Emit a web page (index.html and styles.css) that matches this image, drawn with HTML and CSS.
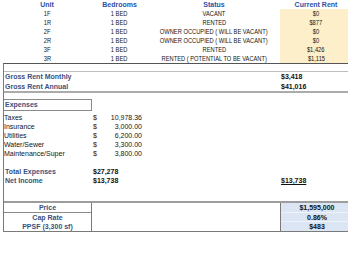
FILE: index.html
```html
<!DOCTYPE html>
<html>
<head>
<meta charset="utf-8">
<link rel="stylesheet" href="styles.css">
</head>
<body>
<div class="sheet">
  <div class="units">
    <div class="r head"><span>Unit</span><span>Bedrooms</span><span>Status</span><span>Current Rent</span></div>
    <div class="r"><span><span class="n">1F</span></span><span><span class="n">1 BED</span></span><span><span class="n">VACANT</span></span><span class="rent"><span class="n">$0</span></span></div>
    <div class="r"><span><span class="n">1R</span></span><span><span class="n">1 BED</span></span><span><span class="n">RENTED</span></span><span class="rent"><span class="n">$877</span></span></div>
    <div class="r"><span><span class="n">2F</span></span><span><span class="n">1 BED</span></span><span><span class="n">OWNER OCCUPIED ( WILL BE VACANT)</span></span><span class="rent"><span class="n">$0</span></span></div>
    <div class="r"><span><span class="n">2R</span></span><span><span class="n">1 BED</span></span><span><span class="n">OWNER OCCUPIED ( WILL BE VACANT)</span></span><span class="rent"><span class="n">$0</span></span></div>
    <div class="r"><span><span class="n">3F</span></span><span><span class="n">1 BED</span></span><span><span class="n">RENTED</span></span><span class="rent"><span class="n">$1,426</span></span></div>
    <div class="r"><span><span class="n">3R</span></span><span><span class="n">1 BED</span></span><span><span class="n">RENTED ( POTENTIAL TO BE VACANT)</span></span><span class="rent"><span class="n">$1,115</span></span></div>
  </div>
  <div class="lower">
    <div class="gap-a"></div>
    <div class="lr tall"><span class="lbl">Gross Rent Monthly</span><span></span><span></span><span class="val">$3,418</span></div>
    <div class="lr"><span class="lbl">Gross Rent Annual</span><span></span><span></span><span class="val">$41,016</span></div>
    <div class="thick"></div>
    <div class="gap-b"></div>
    <div class="exp-box"><span class="lbl">Expenses</span></div>
    <div class="gap-c"></div>
    <div class="lr"><span class="item">Taxes</span><span class="money"><span>$</span><span>10,978.36</span></span></div>
    <div class="lr"><span class="item">Insurance</span><span class="money"><span>$</span><span>3,000.00</span></span></div>
    <div class="lr"><span class="item">Utilities</span><span class="money"><span>$</span><span>6,200.00</span></span></div>
    <div class="lr"><span class="item">Water/Sewer</span><span class="money"><span>$</span><span>3,300.00</span></span></div>
    <div class="lr"><span class="item">Maintenance/Super</span><span class="money"><span>$</span><span>3,800.00</span></span></div>
    <div class="gap-d"></div>
    <div class="lr"><span class="lbl">Total Expenses</span><span class="tot">$27,278</span></div>
    <div class="lr"><span class="lbl">Net Income</span><span class="tot">$13,738</span><span></span><span class="val under">$13,738</span></div>
    <div class="gap-e"></div>
    <div class="rule"></div>
    <div class="price">
      <div class="plabels">
        <div class="pl first">Price</div>
        <div class="pl">Cap Rate</div>
        <div class="pl">PPSF (3,300 sf)</div>
      </div>
      <div class="pmid"></div>
      <div class="pvals">
        <div class="pv">$1,595,000</div>
        <div class="pv">0.86%</div>
        <div class="pv">$483</div>
      </div>
    </div>
  </div>
</div>
</body>
</html>
```
FILE: styles.css
```css
* { box-sizing: border-box; margin: 0; padding: 0; }
body {
  margin: 0;
  width: 348px;
  height: 268px;
  overflow: hidden;
  background: #fff;
  font-family: "Liberation Sans", Arial, sans-serif;
  font-size: 7px;
  color: #151515;
}
.sheet { width: 352px; }
.units { padding-left: 3px; }
.r {
  display: grid;
  grid-template-columns: 88px 57px 132px 72px;
  height: 9px;
  line-height: 9px;
  text-align: center;
  white-space: nowrap;
}
.r .n {
  display: inline-block;
  transform: scaleX(0.82);
  transform-origin: center;
}
.head {
  color: #2c50a3;
  font-weight: bold;
}
.rent { background: #fcefc9; }

.lower {
  margin-left: 3px;
  border-left: 1px solid #7a7a7a;
  border-top: 1px solid #555;
}
.gap-a { height: 8px; border-bottom: 1px solid #bdbdbd; }
.lr {
  display: grid;
  grid-template-columns: 87px 57px 132px 72px;
  height: 9px;
  line-height: 9px;
  white-space: nowrap;
}
.lr.tall { height: 10px; line-height: 10px; }
.lbl { color: #3a5080; font-weight: bold; padding-left: 1px; }
.val { font-weight: bold; padding-left: 1px; color: #111; }
.val.under { text-decoration: underline; }
.thick { height: 2px; background: #ababab; }
.gap-b { height: 6px; }
.exp-box {
  width: 88px;
  height: 12px;
  line-height: 10px;
  border: 1px solid #8a8a8a;
  border-left: none;
}
.gap-c { height: 2px; }
.item { padding-left: 0; }
.money {
  display: flex;
  justify-content: space-between;
  padding-left: 2px;
  padding-right: 6px;
}
.gap-d { height: 9px; }
.tot { font-weight: bold; padding-left: 2px; color: #111; }
.gap-e { height: 16px; }
.rule { height: 2px; background: #9d9d9d; }
.price {
  display: grid;
  grid-template-columns: 88px 189px 72px;
  border-bottom: 1px solid #7a7a7a;
}
.plabels { border-right: 1px solid #7a7a7a; }
.pl {
  height: 9px;
  line-height: 9px;
  text-align: center;
  color: #3a5080;
  font-weight: bold;
}
.pl.first { height: 10px; border-bottom: 1px solid #8a8a8a; }
.pmid { border-right: 1px solid #7a7a7a; }
.pvals { background: #dce5f4; }
.pv {
  height: 9px;
  line-height: 9px;
  text-align: center;
  font-weight: bold;
  color: #111;
  border-bottom: 1px solid #eef2fa;
}
.pv:first-child { height: 10px; }
.pv:last-child { border-bottom: none; }
```
